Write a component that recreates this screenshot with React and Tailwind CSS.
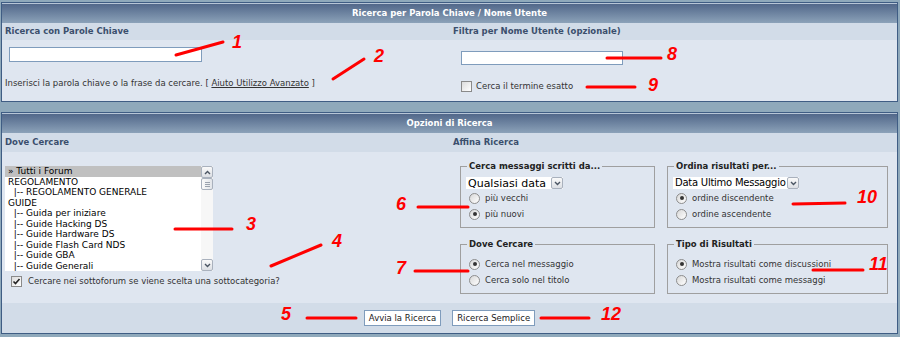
import React from 'react';

const forums = [
  { label: '» Tutti i Forum', selected: true },
  { label: 'REGOLAMENTO' },
  { label: '  |-- REGOLAMENTO GENERALE' },
  { label: 'GUIDE' },
  { label: '  |-- Guida per iniziare' },
  { label: '  |-- Guide Hacking DS' },
  { label: '  |-- Guide Hardware DS' },
  { label: '  |-- Guide Flash Card NDS' },
  { label: '  |-- Guide GBA' },
  { label: '  |-- Guide Generali' },
];

// red annotation strokes drawn over the page
const marks = [
  { n: '1', x: 232, y: 48, line: [176, 55, 223, 42] },
  { n: '2', x: 374, y: 62, line: [333, 79, 364, 59] },
  { n: '8', x: 667, y: 60, line: [607, 58, 661, 58] },
  { n: '9', x: 648, y: 91, line: [587, 87, 635, 87] },
  { n: '3', x: 246, y: 230, line: [175, 229, 232, 229] },
  { n: '6', x: 396, y: 210, line: [418, 207, 468, 207] },
  { n: '4', x: 332, y: 247, line: [271, 266, 321, 245] },
  { n: '7', x: 396, y: 274, line: [415, 271, 468, 271] },
  { n: '5', x: 281, y: 320, line: [307, 318, 356, 318] },
  { n: '12', x: 601, y: 320, line: [541, 318, 589, 318] },
  { n: '10', x: 857, y: 203, line: [793, 204, 845, 203] },
  { n: '11', x: 869, y: 270, line: [813, 270, 863, 270] },
];

function Header({ children }) {
  return (
    <div className="h-[20px] flex items-center justify-center border-t border-[#b7c5d6] bg-linear-to-b from-[#52688a] to-[#8ca2b9] text-white font-bold text-[8.5px]">
      {children}
    </div>
  );
}

function Radio({ checked, children }) {
  return (
    <div className="flex items-center gap-[5px] h-[16px]">
      <span className="w-[11px] h-[11px] rounded-full border border-[#8d8d8d] bg-linear-to-br from-[#d8d8d8] to-white flex items-center justify-center">
        {checked && <span className="w-[4px] h-[4px] rounded-full bg-[#333]" />}
      </span>
      <span>{children}</span>
    </div>
  );
}

function Checkbox({ checked }) {
  return (
    <span className="w-[11px] h-[11px] border border-[#8a8a8a] bg-linear-to-br from-[#dcdcdc] to-white flex items-center justify-center">
      {checked && (
        <svg width="9" height="9" viewBox="0 0 9 9">
          <path d="M1.5 4.5 L3.5 6.5 L7.5 2" fill="none" stroke="#222" strokeWidth="1.6" />
        </svg>
      )}
    </span>
  );
}

function ArrowBox({ up }) {
  return (
    <span className="shrink-0 w-[12px] h-[12px] rounded-[2px] border border-[#a9b1bd] bg-linear-to-b from-[#fafafa] to-[#dcdfe4] flex items-center justify-center">
      <svg width="7" height="5" viewBox="0 0 7 5">
        <path d={up ? 'M1 4 L3.5 1.5 L6 4' : 'M1 1 L3.5 3.5 L6 1'} fill="none" stroke="#4b5563" strokeWidth="1.4" />
      </svg>
    </span>
  );
}

function Select({ value, width, text }) {
  return (
    <div className={`flex items-center bg-white h-[12px] ${width} leading-none text-black`}>
      <span className={`flex-1 pl-[2px] overflow-hidden whitespace-nowrap ${text}`}>{value}</span>
      <ArrowBox />
    </div>
  );
}

function Box({ legend, width, children }) {
  return (
    <fieldset className={`${width} border border-[#9f9f9f] px-[8px] pb-[4px]`}>
      <legend className="-ml-[2px] px-[2px] font-bold text-[#222] leading-[10px]">{legend}</legend>
      {children}
    </fieldset>
  );
}

export default function App() {
  return (
    <div className="relative w-[900px] h-[337px] bg-[#8fa9bb] pt-[2px] pl-px pr-[2px] font-['DejaVu_Sans',sans-serif] text-[8.5px] text-[#333] overflow-hidden">
      {/* Parola chiave / nome utente */}
      <div className="border border-[#3f5d84]">
        <Header>Ricerca per Parola Chiave / Nome Utente</Header>
        <div className="grid grid-cols-[449px_1fr]">
          <div className="h-[17px] bg-[#d2dce8] pl-[3px] flex items-center font-bold text-[#3b4f6d]">Ricerca con Parole Chiave</div>
          <div className="h-[17px] bg-[#d2dce8] pl-[2px] flex items-center font-bold text-[#3b4f6d]">Filtra per Nome Utente (opzionale)</div>
          <div className="h-[61px] bg-[#dfe6f0] pl-[7px] pt-[7px]">
            <div className="w-[193px] h-[15px] bg-white border border-[#7f9cbc]" />
            <div className="mt-[15px] -ml-[4px]">
              Inserisci la parola chiave o la frase da cercare. [ <span className="underline">Aiuto Utilizzo Avanzato</span> ]
            </div>
          </div>
          <div className="h-[61px] bg-[#dfe6f0] pl-[10px] pt-[11px]">
            <div className="w-[162px] h-[14px] bg-white border border-[#7f9cbc]" />
            <div className="mt-[15px] flex items-center gap-[4px]">
              <Checkbox />
              <span>Cerca il termine esatto</span>
            </div>
          </div>
        </div>
      </div>

      {/* Opzioni di ricerca */}
      <div className="mt-[10px] border border-[#3f5d84]">
        <Header>Opzioni di Ricerca</Header>
        <div className="grid grid-cols-[449px_1fr]">
          <div className="h-[19px] bg-[#d2dce8] pl-[3px] flex items-center font-bold text-[#3b4f6d]">Dove Cercare</div>
          <div className="h-[19px] bg-[#d2dce8] pl-[2px] flex items-center font-bold text-[#3b4f6d]">Affina Ricerca</div>

          <div className="h-[151px] bg-[#dfe6f0] pl-[3px] pt-[14px]">
            <div className="flex w-[208px] h-[105px] bg-white">
              <div className="flex-1 text-[9px] text-black leading-[10.5px] whitespace-pre">
                {forums.map((f) => (
                  <div key={f.label} className={f.selected ? 'bg-[#c0c0c0] pl-[3px]' : 'pl-[3px]'}>{f.label}</div>
                ))}
              </div>
              <div className="w-[12px] flex flex-col bg-[#f7f7f7]">
                <ArrowBox up />
                <span className="w-[12px] h-[12px] rounded-[2px] border border-[#a9b1bd] bg-linear-to-r from-[#fafafa] to-[#e2e5e9] flex flex-col items-center justify-center gap-[1px]">
                  <span className="w-[5px] h-px bg-[#9aa2ad]" />
                  <span className="w-[5px] h-px bg-[#9aa2ad]" />
                  <span className="w-[5px] h-px bg-[#9aa2ad]" />
                </span>
                <div className="flex-1" />
                <ArrowBox />
              </div>
            </div>
            <div className="mt-[4px] ml-[6px] flex items-center gap-[6px]">
              <Checkbox checked />
              <span>Cercare nei sottoforum se viene scelta una sottocategoria?</span>
            </div>
          </div>

          <div className="h-[151px] bg-[#dfe6f0] pl-[9px] pt-[9px]">
            <div className="flex gap-[12px]">
              <Box legend="Cerca messaggi scritti da..." width="w-[195px] h-[67px]">
                <div className="-ml-[3px] mt-[6px]">
                  <Select value="Qualsiasi data" width="w-[97px]" text="text-[11px]" />
                </div>
                <div className="mt-[1px]">
                  <Radio>più vecchi</Radio>
                  <Radio checked>più nuovi</Radio>
                </div>
              </Box>
              <Box legend="Ordina risultati per..." width="w-[221px] h-[67px]">
                <div className="-ml-[3px] mt-[6px]">
                  <Select value="Data Ultimo Messaggio" width="w-[126px]" text="text-[10px] tracking-[-0.25px]" />
                </div>
                <div className="mt-[1px]">
                  <Radio checked>ordine discendente</Radio>
                  <Radio>ordine ascendente</Radio>
                </div>
              </Box>
            </div>
            <div className="flex gap-[12px] mt-[11px]">
              <Box legend="Dove Cercare" width="w-[195px] h-[55px]">
                <div className="mt-[7px]">
                  <Radio checked>Cerca nel messaggio</Radio>
                  <Radio>Cerca solo nel titolo</Radio>
                </div>
              </Box>
              <Box legend="Tipo di Risultati" width="w-[221px] h-[55px]">
                <div className="mt-[7px]">
                  <Radio checked>Mostra risultati come discussioni</Radio>
                  <Radio>Mostra risultati come messaggi</Radio>
                </div>
              </Box>
            </div>
          </div>
        </div>
        <div className="h-[30px] bg-[#d2dce8] flex items-center justify-center gap-[11px]">
          <button className="h-[16px] px-[4px] bg-white border border-[#7f9cbc] text-[8.5px] text-[#222] leading-none">Avvia la Ricerca</button>
          <button className="h-[16px] px-[4px] bg-white border border-[#7f9cbc] text-[8.5px] text-[#222] leading-none">Ricerca Semplice</button>
        </div>
      </div>

      <svg className="absolute left-0 top-0 pointer-events-none" width="900" height="337">
        {marks.map((m) => (
          <g key={m.n}>
            <line x1={m.line[0]} y1={m.line[1]} x2={m.line[2]} y2={m.line[3]} stroke="#ff0000" strokeWidth="3" strokeLinecap="round" />
            <text x={m.x} y={m.y} fill="#ff0000" fontFamily="Liberation Sans, sans-serif" fontWeight="bold" fontStyle="italic" fontSize="18">{m.n}</text>
          </g>
        ))}
      </svg>
    </div>
  );
}
